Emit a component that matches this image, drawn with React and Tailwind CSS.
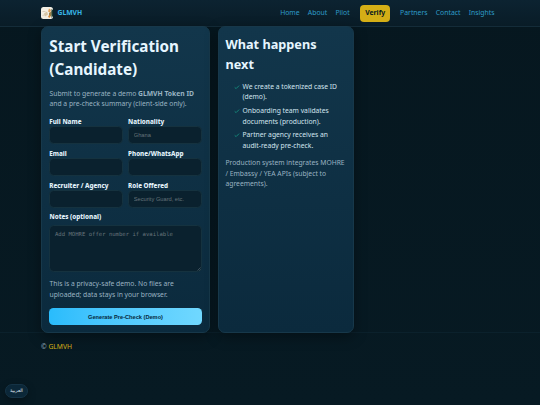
import React from 'react';

const navBefore = ['Home', 'About', 'Pilot'];
const navAfter = ['Partners', 'Contact', 'Insights'];

const fields = [
    { label: 'Full Name', placeholder: '' },
    { label: 'Nationality', placeholder: 'Ghana' },
    { label: 'Email', placeholder: '' },
    { label: 'Phone/WhatsApp', placeholder: '' },
    { label: 'Recruiter / Agency', placeholder: '' },
    { label: 'Role Offered', placeholder: 'Security Guard, etc.' },
];

const steps = [
    ['We create a tokenized case ID', '(demo).'],
    ['Onboarding team validates', 'documents (production).'],
    ['Partner agency receives an', 'audit-ready pre-check.'],
];

const cardClass = 'rounded-[7px] border border-[#17384a] bg-linear-to-b from-[#12364b] to-[#0b2a3d] shadow-[0_4px_13px_rgba(0,0,0,0.35)]';

const Logo = () => (
    <svg viewBox="0 0 12 12" className="h-[12px] w-[12px] rounded-[2.5px]">
        <rect width="12" height="12" fill="#f3efe4" />
        <path d="M1.5 4.5h3M1.5 8.5l3-1" stroke="#d9cdb8" strokeWidth="1" />
        <path d="M3 6.5l3-2 1 3-3 2z" fill="#d5c5a5" />
        <path d="M8 1.5l2 1.5-1 2.5-2-1z" fill="#dfa05a" />
        <path d="M8 6l3-2-.5 4.5L8 10z" fill="#9a8049" />
        <path d="M10.5 2l1.5 1v6l-1.5 2z" fill="#18382e" />
        <path d="M7 9l2-1 .5 2L8 11z" fill="#d88a38" />
    </svg>
);

const Header = () => (
    <header className="h-[27px] border-b border-[#142c39] bg-linear-to-b from-[#0c2331] to-[#091c27]">
        <div className="mx-auto flex h-[26px] w-[458px] items-center justify-between pr-[4.5px]">
            <div className="flex items-center gap-[4.5px] font-bold text-[#38b6e8]">
                <Logo />
                <span>GLMVH</span>
            </div>
            <nav className="flex items-center gap-[8.2px] text-[6.85px] text-[#2e9cc8]">
                {navBefore.map((item) => <a key={item} href="#">{item}</a>)}
                <a href="#" className="mr-[1.5px] ml-[2px] flex h-[17px] w-[30.5px] items-center justify-center rounded-[4px] bg-[#d4ae16] font-bold text-[#071820]">Verify</a>
                {navAfter.map((item) => <a key={item} href="#">{item}</a>)}
            </nav>
        </div>
    </header>
);

const Field = ({ label, placeholder }) => (
    <label className="block text-[6.3px] leading-[9.5px] font-extrabold text-[#e2f1fa]">
        <span className="pl-[0.3px]">{label}</span>
        <input
            placeholder={placeholder}
            className="block h-[18px] w-full rounded-[4.5px] border border-[#15323f] bg-[#0a212e] px-[5px] font-['Liberation_Sans',sans-serif] text-[5.7px] font-normal placeholder:text-[#66747b]"
        />
    </label>
);

const VerificationForm = () => (
    <form className={`h-[307px] w-[169px] px-[7px] pt-[7.5px] ${cardClass}`}>
        <h1 className="pl-[0.3px] text-[15.25px] leading-[23.8px] font-bold whitespace-nowrap text-[#e6f6ff]">
            Start Verification<br />(Candidate)
        </h1>
        <p className="mt-[6.5px] pl-[0.5px] whitespace-nowrap text-[#9ab3c2]">
            Submit to generate a demo <strong>GLMVH Token ID</strong><br />
            and a pre-check summary (client-side only).
        </p>
        <div className="mt-[7px] grid grid-cols-2 gap-x-[4.5px] gap-y-[4.5px]">
            {fields.map((field) => <Field key={field.label} {...field} />)}
        </div>
        <label className="mt-[3px] block text-[6.3px] leading-[12px] font-extrabold text-[#e2f1fa]">
            <span className="pl-[0.5px]">Notes (optional)</span>
            <span className="relative mt-[2px] block">
                <textarea
                    placeholder="Add MOHRE offer number if available"
                    className="block h-[47px] w-full resize-none rounded-[4.5px] border border-[#15323f] bg-[#0a212e] px-[5px] py-[4px] font-['DejaVu_Sans_Mono',monospace] text-[5.6px] leading-[8px] font-normal placeholder:text-[#66747b]"
                />
                <svg viewBox="0 0 4 4" className="absolute right-[1px] bottom-[1px] h-[4px] w-[4px]">
                    <path d="M0.5 3.5l3-3M2.5 3.5l1-1" stroke="#71808a" strokeWidth="0.5" />
                </svg>
            </span>
        </label>
        <p className="mt-[7px] pl-[0.5px] whitespace-nowrap text-[#9ab3c2]">
            This is a privacy-safe demo. No files are<br />uploaded; data stays in your browser.
        </p>
        <button type="button" className="mt-[8px] block h-[17px] w-full rounded-[4.5px] bg-linear-to-r from-[#29bcfc] to-[#70d8ff] font-['Liberation_Sans',sans-serif] text-[5.65px] font-bold text-[#04283c]">
            Generate Pre-Check (Demo)
        </button>
    </form>
);

const NextSteps = () => (
    <section className={`h-[307px] w-[136.5px] px-[7px] pt-[8px] ${cardClass}`}>
        <h2 className="text-[12.7px] leading-[19.6px] font-bold text-[#e6f6ff]">
            What happens<br />next
        </h2>
        <ul className="mt-[7.5px] flex flex-col gap-[3.2px] pl-[8px] whitespace-nowrap text-[#d3e5ef]">
            {steps.map(([first, second]) => (
                <li key={first} className="flex">
                    <svg viewBox="0 0 6 6" className="mt-[2px] mr-[3px] h-[6px] w-[6px]" fill="none">
                        <path d="M0.7 3.4l1.4 1.2 3-3" stroke="#168f7f" strokeWidth="0.9" />
                    </svg>
                    <span>{first}<br />{second}</span>
                </li>
            ))}
        </ul>
        <p className="mt-[6.5px] whitespace-nowrap text-[#9ab3c2]">
            Production system integrates MOHRE<br />/ Embassy / YEA APIs (subject to<br />agreements).
        </p>
    </section>
);

const App = () => (
    <div className="relative h-[405px] overflow-hidden bg-linear-to-b from-[#06171f] to-[#071a23] font-['Noto_Sans',sans-serif] text-[6.75px] leading-[10.6px]">
        <Header />
        <main className="-mt-px ml-[41px] flex gap-[7.5px]">
            <VerificationForm />
            <NextSteps />
        </main>
        <footer className="-mt-px border-t border-[#0b212c] pt-[8.5px] pl-[41px] text-[#9ab3c2]">
            © <a href="#" className="text-[#d4ae16]">GLMVH</a>
        </footer>
        <button type="button" className="absolute bottom-[7px] left-[5px] h-[14px] w-[23px] rounded-full border border-[#153345] bg-[#0b2738] font-['DejaVu_Sans',sans-serif] text-[4.7px] leading-none text-[#e2f1fa] shadow-[0_3px_8px_rgba(0,0,0,0.3)]">
            العربية
        </button>
    </div>
);

export default App;
